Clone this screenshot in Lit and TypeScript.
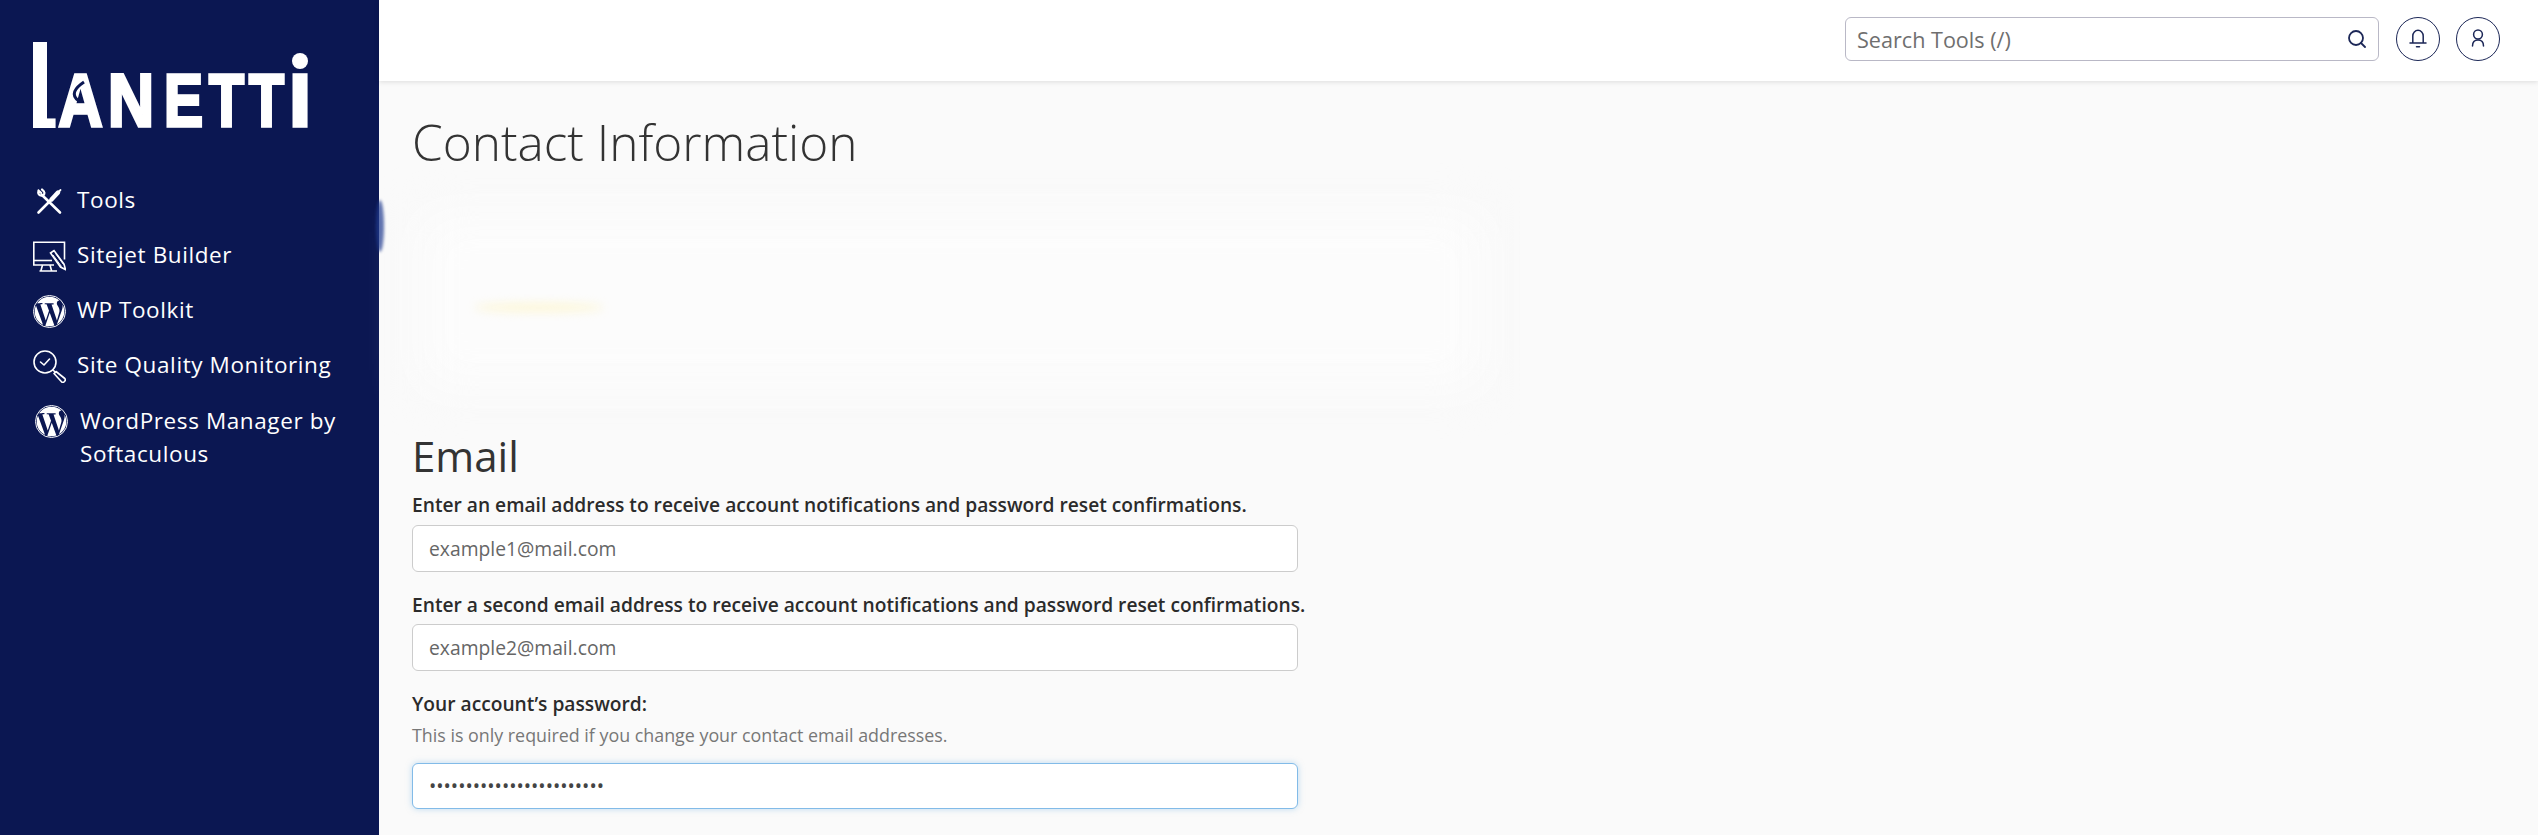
import { LitElement, html, css, svg } from "lit";
import { customElement } from "lit/decorators.js";

const wp = svg`<circle cx="12" cy="12" r="11.65" fill="none" stroke="#fff" stroke-width=".7"/><path fill="#fff" d="M21.469 6.825c.84 1.537 1.318 3.3 1.318 5.175 0 3.979-2.156 7.456-5.363 9.325l3.295-9.527c.615-1.54.82-2.771.82-3.864 0-.405-.026-.78-.07-1.11m-7.981.105c.647-.03 1.232-.105 1.232-.105.582-.075.514-.93-.067-.899 0 0-1.755.135-2.88.135-1.064 0-2.85-.15-2.85-.15-.585-.03-.661.855-.075.885 0 0 .54.061 1.125.09l1.68 4.605-2.37 7.08L5.354 6.9c.649-.03 1.234-.1 1.234-.1.585-.075.516-.93-.065-.896 0 0-1.746.138-2.874.138-.2 0-.438-.008-.69-.015C4.911 3.15 8.235 1.215 12 1.215c2.809 0 5.365 1.072 7.286 2.833-.046-.003-.091-.009-.141-.009-1.06 0-1.812.923-1.812 1.914 0 .89.513 1.643 1.06 2.531.411.72.89 1.643.89 2.977 0 .915-.354 1.994-.821 3.479l-1.075 3.585-3.9-11.61.001.014zM12 22.784c-1.059 0-2.081-.153-3.048-.437l3.237-9.406 3.315 9.087c.024.053.05.101.078.149-1.12.393-2.325.609-3.582.609M1.211 12c0-1.564.336-3.05.935-4.39L7.29 21.709C3.694 19.96 1.212 16.271 1.211 12"/>`;

const icons = {
  tools: html`<svg class="ic" viewBox="0 0 33 33" fill="none" stroke="#fff" stroke-width="2.6" stroke-linecap="round" stroke-linejoin="round">
    <path d="M9 10 L27 27.5"/>
    <path d="M5.5 5.5 C4.5 8.5 6 11 9.5 10.5 C11.5 10 11.8 8 11 6.5 M8.2 8 L5.5 5.5 M11 6.5 L9 4.5" stroke-width="2.2"/>
    <path d="M5.5 27.5 L18 15"/>
    <path d="M18.5 14.5 L25 7.5" stroke-width="4.4"/>
    <path d="M25.5 7 L27.5 5" stroke-width="1.8"/>
  </svg>`,
  sitejet: html`<svg class="ic" viewBox="0 0 33 33" fill="none" stroke="#fff" stroke-width="1.6">
    <path d="M21 25 H.8 V2.3 H31.5 V19.5"/>
    <path d="M.8 20.5 H19"/>
    <path d="M9.5 25 L8 30.5 M17 25 L18.5 30.5 M6.5 31 H24"/>
    <path d="M17.5 13 L21 10.5 L31 24 L32.5 29.5 L27.5 27 Z" fill="#0b1752"/>
    <path d="M20 15 L28.5 26.5 M22.5 13.5 L30.5 24.5" stroke-width="1"/>
  </svg>`,
  wp: html`<svg class="ic" viewBox="0 0 24 24">${wp}</svg>`,
  quality: html`<svg class="ic" viewBox="0 0 33 33" fill="none" stroke="#fff" stroke-width="1.6" stroke-linecap="round" stroke-linejoin="round">
    <circle cx="12" cy="12" r="11"/>
    <path d="M7.5 12 L11 15 L16.5 9"/>
    <path d="M20 20 L22.5 22.5"/>
    <path d="M23 21.5 L31.8 28.5 C33.5 30.5 30.5 33.5 28.5 31.8 L21 23.5 Z"/>
  </svg>`,
};

const nav = [
  { icon: icons.tools, label: "Tools" },
  { icon: icons.sitejet, label: "Sitejet Builder" },
  { icon: icons.wp, label: "WP Toolkit" },
  { icon: icons.quality, label: "Site Quality Monitoring" },
];

@customElement("app-root")
export class AppRoot extends LitElement {
  static styles = css`
    :host { display: block; width: 2538px; height: 835px; overflow: hidden; font-family: "Open Sans", "Noto Sans", sans-serif; background: #fafafa; color: #2b2b2b; }
    .page { display: flex; height: 835px; }
    .side { width: 379px; flex: none; background: #0b1752; color: #fff; }
    .logo { display: block; margin: 34px 0 0 24px; }
    .logo text { font-family: "Liberation Sans", sans-serif; font-weight: 700; fill: #fff; stroke: #fff; stroke-width: 3.5; }
    .logo .l { font-weight: 400; stroke-width: 0; }
    .nav { display: flex; flex-direction: column; padding: 51px 0 0 33px; }
    .item { display: flex; align-items: flex-start; height: 55px; gap: 11px; font-size: 22.5px; letter-spacing: 0.6px; line-height: 31px; }
    .item span { margin-top: -1.5px; }
    .ic { width: 33px; height: 33px; flex: none; }
    .item.wrap { height: auto; padding-left: 2px; gap: 12px; line-height: 33px; }
    .item.wrap span { width: 290px; }
    .main { flex: 1; min-width: 0; display: flex; flex-direction: column; }
    .top { height: 81px; flex: none; background: #fff; box-shadow: 0 1px 5px rgba(0,0,0,.12); display: flex; align-items: flex-start; justify-content: flex-end; gap: 16px; padding: 17px 38px 0 0; box-sizing: border-box; position: relative; }
    .search { width: 534px; height: 44px; margin-right: 1px; box-sizing: border-box; border: 1px solid #b9b8c6; border-radius: 6px; display: flex; align-items: center; padding: 0 12px 0 11px; justify-content: space-between; color: #6f6f6f; font-size: 21.6px; }
    .search svg { width: 18px; height: 18px; }
    .round { width: 44px; height: 44px; box-sizing: border-box; border: 1.5px solid #1c2757; border-radius: 50%; display: flex; align-items: center; justify-content: center; }
    .round svg { width: 20px; height: 20px; }
    .content { padding: 27px 0 0 33px; }
    h1 { margin: 0; font-weight: 300; font-size: 49.5px; line-height: 68px; color: #333; }
    .blur { height: 254px; position: relative; }
    .glow { position: absolute; left: 10px; top: 40px; width: 1060px; height: 170px; background: #fcfcfc; filter: blur(24px); }
    .smear { position: absolute; left: 62px; top: 127px; width: 130px; height: 9px; border-radius: 50%; background: #fdf7d8; filter: blur(5px); }
    .edge { position: absolute; left: -36px; top: 24px; width: 8px; height: 52px; background: #1f3a8f; border-radius: 50%; filter: blur(1.5px); opacity: .7; }
    h2 { margin: 0; font-weight: 400; font-size: 42px; line-height: 52px; color: #333; }
    label { display: block; font-weight: 600; font-size: 19.2px; line-height: 27px; color: #2b2b2b; margin-top: 19px; }
    h2 + label { margin-top: 9px; }
    .field { box-sizing: border-box; width: 886px; height: 47px; margin-top: 6.5px; background: #fff; border: 1.5px solid #ccc; border-radius: 6px; display: flex; align-items: center; padding-left: 16px; font-size: 19.3px; color: #666; }
    .help { font-size: 17.85px; line-height: 27px; color: #777; margin-top: 5px; }
    .field.focus { border-color: #82bbe8; box-shadow: 0 0 6px rgba(130,187,232,.5); color: #444; font-size: 19.4px; margin-top: 13.5px; height: 46px; }
  `;

  render() {
    return html`<div class="page">
      <aside class="side">
        <svg class="logo" width="300" height="100" viewBox="24 34 300 100">
          <text class="l" x="33" y="128" font-size="125" textLength="24" lengthAdjust="spacingAndGlyphs">L</text>
          <rect x="33" y="42" width="14" height="86" fill="#fff"/>
          <text x="58.5" y="126.3" font-size="75" textLength="44" lengthAdjust="spacingAndGlyphs">A</text>
          <path d="M84 82 C75 88 70 95 79 101" fill="none" stroke="#0b1752" stroke-width="3"/>
          <text x="108" y="126.3" font-size="75" textLength="46" lengthAdjust="spacingAndGlyphs">N</text>
          <text x="164" y="126.3" font-size="75" textLength="39" lengthAdjust="spacingAndGlyphs">E</text>
          <text x="209" y="126.3" font-size="75" textLength="35" lengthAdjust="spacingAndGlyphs">T</text>
          <text x="249" y="126.3" font-size="75" textLength="35" lengthAdjust="spacingAndGlyphs">T</text>
          <text x="288" y="126.3" font-size="97" textLength="24" lengthAdjust="spacingAndGlyphs">ı</text>
          <circle cx="300" cy="61" r="8" fill="#fff"/>
        </svg>
        <nav class="nav">
          ${nav.map((n) => html`<div class="item">${n.icon}<span>${n.label}</span></div>`)}
          <div class="item wrap">${icons.wp}<span>WordPress Manager by Softaculous</span></div>
        </nav>
      </aside>
      <div class="main">
        <header class="top">
          <div class="search"><span>Search Tools (/)</span>
            <svg viewBox="0 0 18 18" fill="none" stroke="#1c2757" stroke-width="1.8"><circle cx="8" cy="8" r="7"/><path d="M13 13 L17 17" stroke-linecap="round"/></svg>
          </div>
          <div class="round"><svg viewBox="0 0 20 20" fill="none" stroke="#1c2757" stroke-width="1.5" stroke-linecap="round"><path d="M4.8 14 V7 a5.2 5.7 0 0 1 10.4 0 V14 M2 14 H18 M8.5 17.7 H11.5"/></svg></div>
          <div class="round"><svg viewBox="0 0 20 20" fill="none" stroke="#1c2757" stroke-width="1.5" stroke-linecap="round"><circle cx="10" cy="5.5" r="4.4"/><path d="M4.5 17 C4.5 12.5 7 11 10 11 C13 11 15.5 12.5 15.5 17"/></svg></div>
        </header>
        <main class="content">
          <h1>Contact Information</h1>
          <div class="blur"><div class="glow"></div><div class="edge"></div><div class="smear"></div></div>
          <h2>Email</h2>
          <label>Enter an email address to receive account notifications and password reset confirmations.</label>
          <div class="field">example1@mail.com</div>
          <label>Enter a second email address to receive account notifications and password reset confirmations.</label>
          <div class="field">example2@mail.com</div>
          <label>Your account’s password:</label>
          <div class="help">This is only required if you change your contact email addresses.</div>
          <div class="field focus">••••••••••••••••••••••••</div>
        </main>
      </div>
    </div>`;
  }
}
